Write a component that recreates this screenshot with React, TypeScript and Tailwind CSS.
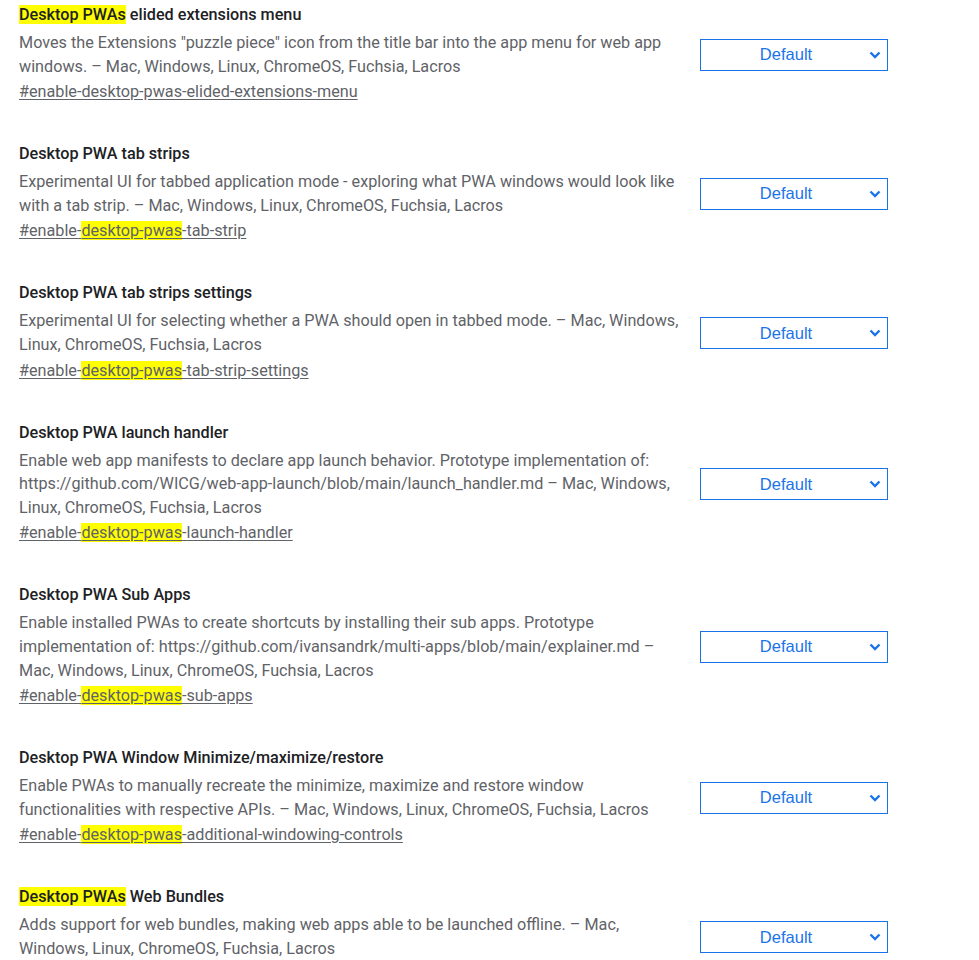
import React from "react";

type Flag = {
  title: React.ReactNode;
  desc: string;
  link: React.ReactNode;
};

const Hl = ({ children }: { children: React.ReactNode }) => (
  <mark className="bg-[#ffff00] text-inherit">{children}</mark>
);

const flags: Flag[] = [
  {
    title: (
      <>
        <Hl>Desktop PWAs</Hl> elided extensions menu
      </>
    ),
    desc: 'Moves the Extensions "puzzle piece" icon from the title bar into the app menu for web app windows. – Mac, Windows, Linux, ChromeOS, Fuchsia, Lacros',
    link: <>#enable-desktop-pwas-elided-extensions-menu</>,
  },
  {
    title: "Desktop PWA tab strips",
    desc: "Experimental UI for tabbed application mode - exploring what PWA windows would look like with a tab strip. – Mac, Windows, Linux, ChromeOS, Fuchsia, Lacros",
    link: (
      <>
        #enable-<Hl>desktop-pwas</Hl>-tab-strip
      </>
    ),
  },
  {
    title: "Desktop PWA tab strips settings",
    desc: "Experimental UI for selecting whether a PWA should open in tabbed mode. – Mac, Windows, Linux, ChromeOS, Fuchsia, Lacros",
    link: (
      <>
        #enable-<Hl>desktop-pwas</Hl>-tab-strip-settings
      </>
    ),
  },
  {
    title: "Desktop PWA launch handler",
    desc: "Enable web app manifests to declare app launch behavior. Prototype implementation of: https://github.com/WICG/web-app-launch/blob/main/launch_handler.md – Mac, Windows, Linux, ChromeOS, Fuchsia, Lacros",
    link: (
      <>
        #enable-<Hl>desktop-pwas</Hl>-launch-handler
      </>
    ),
  },
  {
    title: "Desktop PWA Sub Apps",
    desc: "Enable installed PWAs to create shortcuts by installing their sub apps. Prototype implementation of: https://github.com/ivansandrk/multi-apps/blob/main/explainer.md – Mac, Windows, Linux, ChromeOS, Fuchsia, Lacros",
    link: (
      <>
        #enable-<Hl>desktop-pwas</Hl>-sub-apps
      </>
    ),
  },
  {
    title: "Desktop PWA Window Minimize/maximize/restore",
    desc: "Enable PWAs to manually recreate the minimize, maximize and restore window functionalities with respective APIs. – Mac, Windows, Linux, ChromeOS, Fuchsia, Lacros",
    link: (
      <>
        #enable-<Hl>desktop-pwas</Hl>-additional-windowing-controls
      </>
    ),
  },
  {
    title: (
      <>
        <Hl>Desktop PWAs</Hl> Web Bundles
      </>
    ),
    desc: "Adds support for web bundles, making web apps able to be launched offline. – Mac, Windows, Linux, ChromeOS, Fuchsia, Lacros",
    link: (
      <>
        #enable-<Hl>desktop-pwas</Hl>-web-bundles
      </>
    ),
  },
];

const Select = () => (
  <div className="relative flex h-[32px] w-[188px] shrink-0 items-center justify-center border border-[#1a73e8] bg-white font-['Liberation_Sans',Arial,sans-serif] text-[16.5px] text-[#1a73e8]">
    <span className="-ml-[16px]">Default</span>
    <svg
      className="absolute right-[6px] top-[11px]"
      width="12"
      height="8"
      viewBox="0 0 12 8"
      fill="none"
    >
      <path d="M1.5 1.5 6 6 10.5 1.5" stroke="#1a73e8" strokeWidth="2.4" />
    </svg>
  </div>
);

export default function App() {
  return (
    <div className="min-h-screen bg-white pl-[19px] pt-[5px] font-['Roboto',sans-serif]">
      {flags.map((f, i) => (
        <div key={i} className="mb-[40px] flex items-center">
          <div className="w-[665px] shrink-0">
            <div className="text-[16.2px] font-medium leading-[20px] text-[#202124]">
              {f.title}
            </div>
            <div className="mt-[6px] text-[16.2px] leading-[23.6px] text-[#5f6368]">
              {f.desc}
            </div>
            <div className="mt-[2px] text-[16.2px] leading-[24px] text-[#5f6368] underline underline-offset-[2px]">
              {f.link}
            </div>
          </div>
          <div className="ml-[16px]">
            <Select />
          </div>
        </div>
      ))}
    </div>
  );
}
